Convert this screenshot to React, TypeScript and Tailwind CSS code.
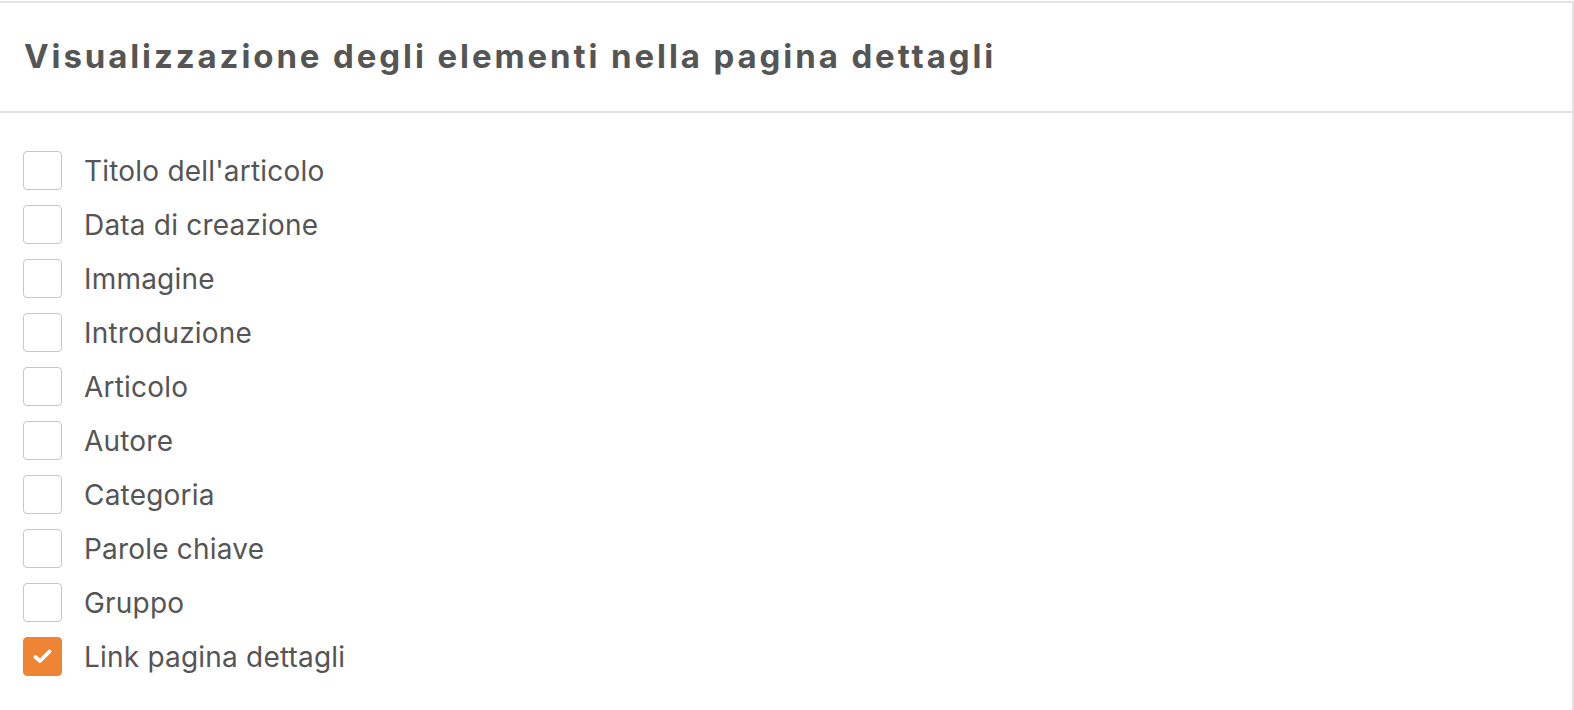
import React, { useState } from 'react';

const items = [
  "Titolo dell'articolo",
  'Data di creazione',
  'Immagine',
  'Introduzione',
  'Articolo',
  'Autore',
  'Categoria',
  'Parole chiave',
  'Gruppo',
  'Link pagina dettagli',
];

const App: React.FC = () => {
  const [checked, setChecked] = useState<boolean[]>(items.map((_, i) => i === items.length - 1));

  const toggle = (i: number) =>
    setChecked((prev) => prev.map((v, j) => (j === i ? !v : v)));

  return (
    <div className="min-h-[710px] bg-white pt-px font-['Inter',sans-serif] text-[#555555]">
      <div className="border-t-[2px] border-r-[2px] border-[#e3e3e3]">
        {/* Header */}
        <div className="flex h-[110px] items-center border-b-[2px] border-[#e3e3e3] px-6">
          <h2 className="text-[33px] font-bold tracking-[2.9px]">
            Visualizzazione degli elementi nella pagina dettagli
          </h2>
        </div>

        {/* Options */}
        <div className="flex flex-col gap-[15px] px-[23px] pt-[38px] pb-[36px]">
          {items.map((label, i) => (
            <label key={label} className="flex cursor-pointer items-center gap-[22px]">
              <button
                type="button"
                onClick={() => toggle(i)}
                className={
                  checked[i]
                    ? 'flex h-[39px] w-[39px] items-center justify-center rounded-[4px] border-[1.5px] border-[#ee8434] bg-[#ee8434]'
                    : 'flex h-[39px] w-[39px] items-center justify-center rounded-[4px] border-[1.5px] border-[#c3c7cf] bg-white'
                }
              >
                {checked[i] && (
                  <svg width="19" height="15" viewBox="0 0 19 15" fill="none">
                    <path d="M2.5 8L7 12L16.5 2.5" stroke="white" strokeWidth="3.8" strokeLinecap="round" strokeLinejoin="round" />
                  </svg>
                )}
              </button>
              <span className="text-[28px] leading-none tracking-[0.2px]">{label}</span>
            </label>
          ))}
        </div>
      </div>
    </div>
  );
};

export default App;
